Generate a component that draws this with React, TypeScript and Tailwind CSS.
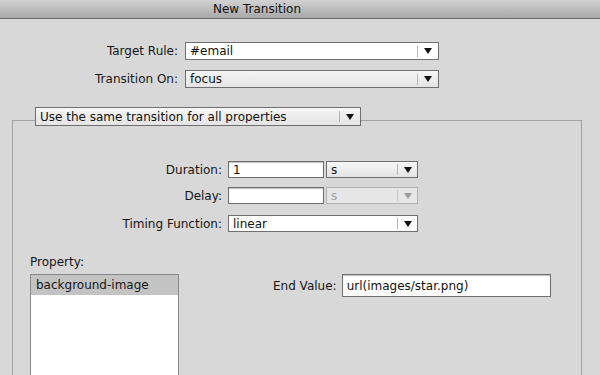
import React from "react";

const Arrow = ({ disabled }: { disabled?: boolean }) => (
  <svg width="8" height="6" viewBox="0 0 8 6">
    <polygon points="0,0 8,0 4,6" fill={disabled ? "#9a9a9a" : "#111"} />
  </svg>
);

function Select({
  value,
  width,
  height = 18,
  white,
  disabled,
  sepOffset = 20,
}: {
  value: string;
  width: number;
  height?: number;
  white?: boolean;
  disabled?: boolean;
  sepOffset?: number;
}) {
  return (
    <div
      className={
        "flex items-center border shrink-0 " +
        (disabled
          ? "border-[#b3b3b3] bg-[#e6e6e6] text-[#a3a3a3]"
          : white
          ? "border-[#6f6f6f] bg-white text-[#111]"
          : "border-[#6f6f6f] bg-gradient-to-b from-[#f6f6f6] to-[#e4e4e4] text-[#111]")
      }
      style={{ width, height }}
    >
      <div className="flex-1 pl-[4px] leading-none truncate">{value}</div>
      <div
        className={"h-[11px] w-px " + (disabled ? "bg-[#c8c8c8]" : "bg-[#b5b5b5]")}
      />
      <div className="flex items-center justify-center" style={{ width: sepOffset - 1 }}>
        <Arrow disabled={disabled} />
      </div>
    </div>
  );
}

function Input({ value, width, height = 17 }: { value: string; width: number; height?: number }) {
  return (
    <div
      className="flex items-center border border-[#6f6f6f] bg-white text-[#111] pl-[4px] leading-none shrink-0 shadow-[inset_0_1px_1px_rgba(0,0,0,0.25)]"
      style={{ width, height }}
    >
      {value}
    </div>
  );
}

export default function App() {
  return (
    <div
      className="w-[600px] h-[375px] overflow-hidden bg-[#d8d8d8] text-[12px] text-[#161616] flex flex-col"
      style={{ fontFamily: '"DejaVu Sans", "Liberation Sans", sans-serif' }}
    >
      {/* Title bar */}
      <div className="h-[19px] shrink-0 bg-gradient-to-b from-[#d2d2d2] to-[#a8a8a8] border-b border-[#6a6a6a] flex items-center pl-[213px]">
        <span className="text-[12px] text-[#111] leading-none">New Transition</span>
      </div>

      {/* Top rows */}
      <div className="flex flex-col gap-[10px] mt-[23px]">
        <div className="flex items-center gap-[7px] h-[18px]">
          <div className="w-[178px] text-right">Target Rule:</div>
          <Select value="#email" width={254} white sepOffset={21} />
        </div>
        <div className="flex items-center gap-[7px] h-[18px]">
          <div className="w-[178px] text-right">Transition On:</div>
          <Select value="focus" width={254} sepOffset={21} />
        </div>
      </div>

      {/* Group box */}
      <div className="ml-[12px] w-[570px] mt-[32px] flex-1 border-l border-t border-r border-[#a2a2a2] flex flex-col">
        <div className="ml-[22px] mt-[-14px]">
          <Select value="Use the same transition for all properties" width={326} height={19} sepOffset={21} />
        </div>

        <div className="flex flex-col mt-[35px]">
          <div className="flex items-center gap-[6px] h-[17px]">
            <div className="w-[209px] text-right">Duration:</div>
            <Input value="1" width={96} height={17} />
            <div className="ml-[-4px]">
              <Select value="s" width={92} height={17} sepOffset={20} />
            </div>
          </div>
          <div className="flex items-center gap-[6px] h-[17px] mt-[9px]">
            <div className="w-[209px] text-right">Delay:</div>
            <Input value="" width={96} height={17} />
            <div className="ml-[-4px]">
              <Select value="s" width={92} height={17} sepOffset={20} disabled />
            </div>
          </div>
          <div className="flex items-center gap-[6px] h-[17px] mt-[11px]">
            <div className="w-[209px] text-right">Timing Function:</div>
            <Select value="linear" width={190} height={17} white sepOffset={20} />
          </div>
        </div>

        <div className="flex mt-[23px] pl-[17px]">
          <div className="flex flex-col">
            <div className="leading-[14px] h-[14px] mb-[5px]">Property:</div>
            <div className="w-[149px] h-[110px] border border-[#8a8a8a] bg-white flex flex-col">
              <div className="h-[20px] bg-[#c3c3c3] flex items-center pl-[5px] leading-none">
                background-image
              </div>
            </div>
          </div>
          <div className="flex items-center gap-[5px] ml-[94px] mt-[19px] self-start h-[23px]">
            <div>End Value:</div>
            <Input value="url(images/star.png)" width={209} height={23} />
          </div>
        </div>
      </div>
    </div>
  );
}
